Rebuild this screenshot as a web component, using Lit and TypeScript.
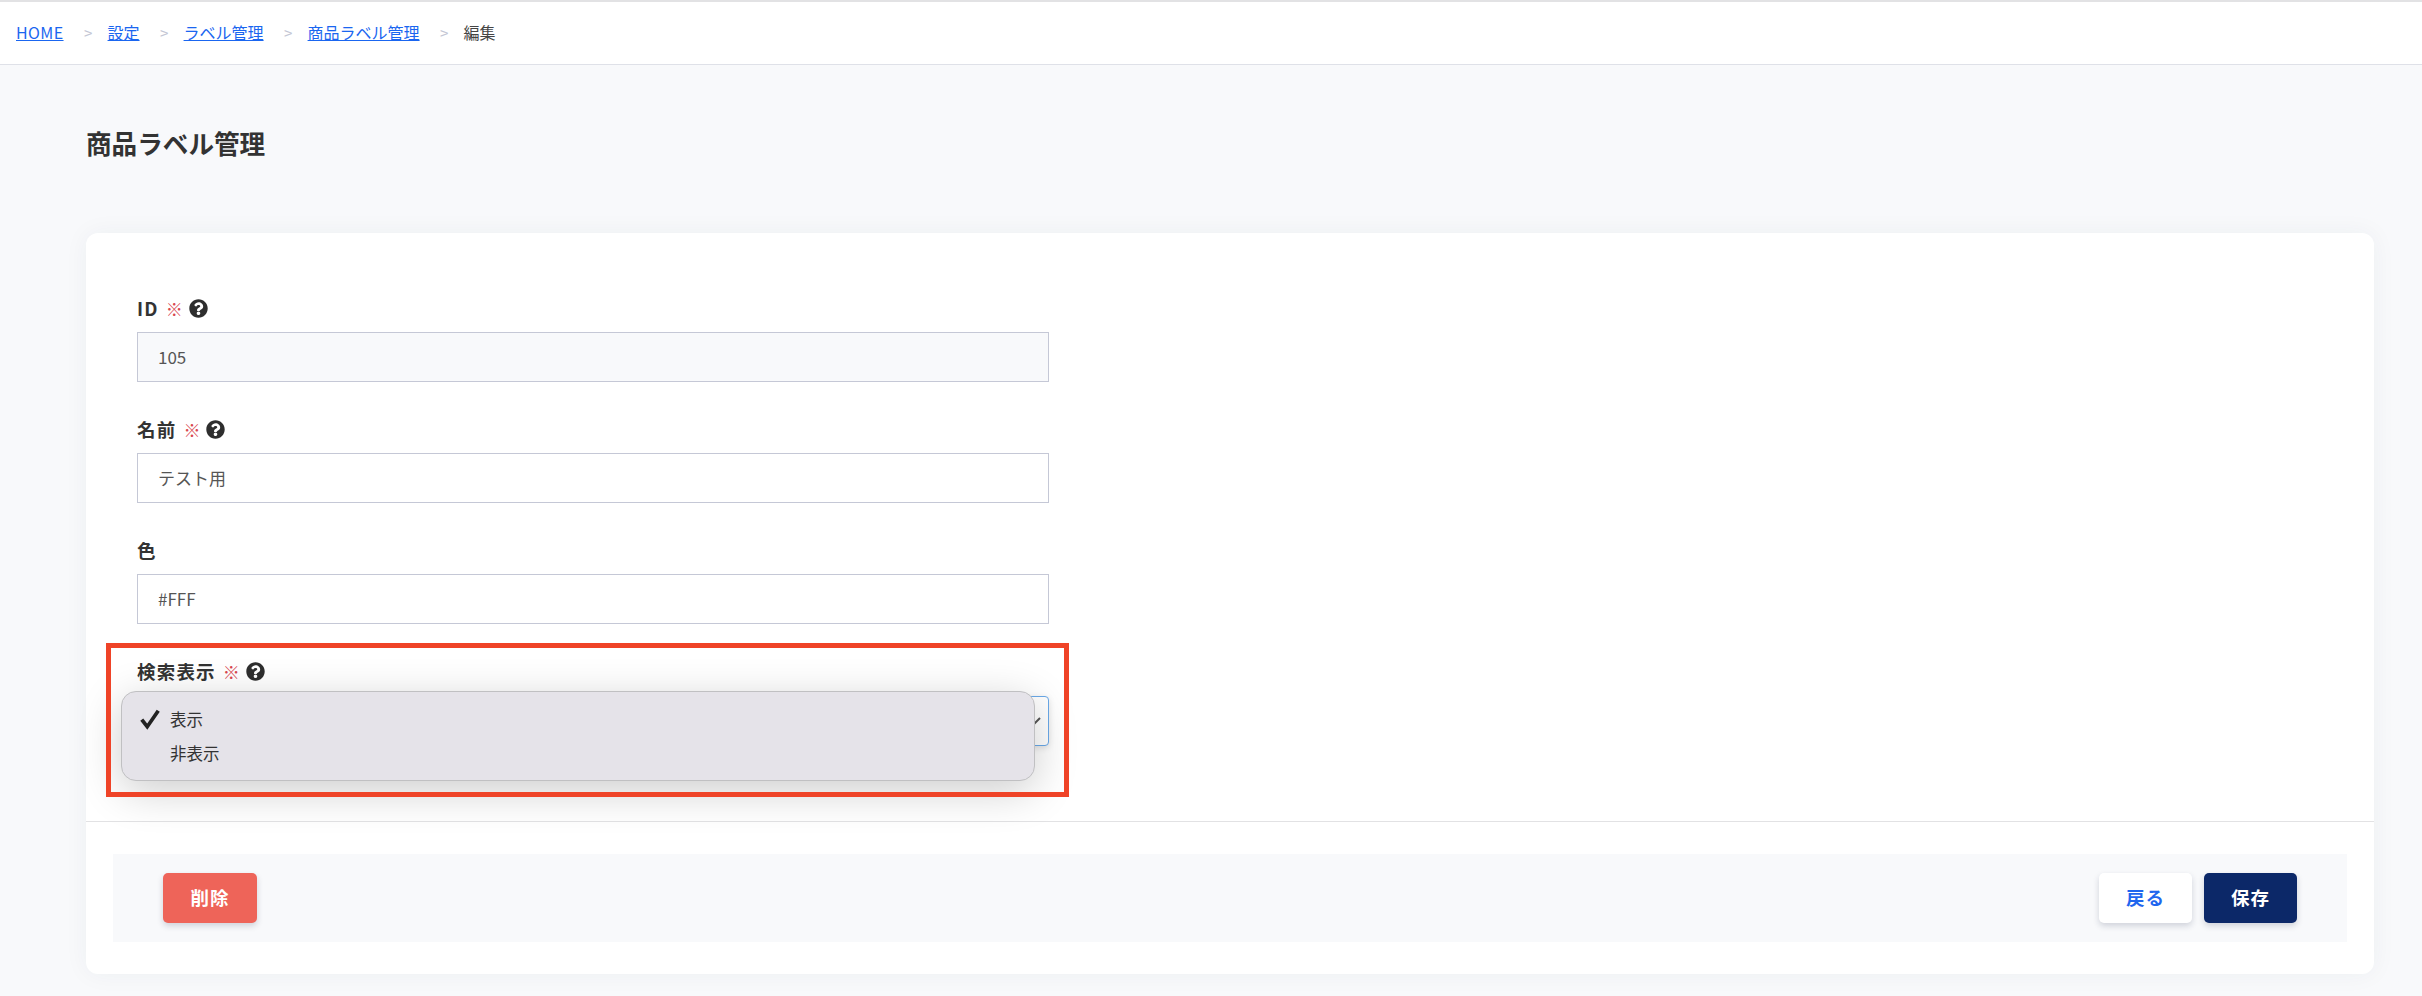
import { LitElement, html, css } from 'lit';
import { customElement } from 'lit/decorators.js';

const helpIcon = html`<svg class="help" viewBox="0 0 512 512" fill="currentColor"><path d="M504 256c0 136.997-111.043 248-248 248S8 392.997 8 256C8 119.083 119.043 8 256 8s248 111.083 248 248zM262.655 90c-54.497 0-89.255 23.87-116.549 66.493-3.536 5.522-2.35 12.797 2.87 16.754l34.722 26.328c5.363 4.067 13.01 3.12 17.212-2.141 17.868-22.37 30.133-35.34 57.344-35.34 20.445 0 45.731 13.157 45.731 32.983 0 14.988-12.372 22.683-32.558 34.02C247.922 243.255 216 263.95 216 306.2V312c0 6.627 5.373 12 12 12h56c6.627 0 12-5.373 12-12v-1.92c0-29.27 85.62-30.52 85.62-109.72C381.62 140.69 319.6 90 262.655 90zM256 338c-26.467 0-48 21.533-48 48 0 26.467 21.533 48 48 48s48-21.533 48-48c0-26.467-21.533-48-48-48z"/></svg>`;

@customElement('app-root')
export class AppRoot extends LitElement {
  static styles = css`
    :host {
      display: block;
      min-height: 996px;
      background: #f8f9fb;
      font-family: "Noto Sans CJK JP", "Noto Sans", sans-serif;
      color: #333;
      overflow: hidden;
    }
    .crumbs {
      display: flex;
      align-items: center;
      height: 60px;
      padding: 0 0 2px 16px;
      background: #fff;
      border-top: 2px solid #e2e2e4;
      border-bottom: 1px solid #dfe1e8;
      font-size: 16px;
    }
    .crumbs a {
      color: #1a66f0;
      text-decoration: underline;
    }
    .crumbs .home {
      letter-spacing: 0.4px;
    }
    .crumbs .sep {
      width: 44px;
      padding-left: 5px;
      box-sizing: border-box;
      text-align: center;
      color: #c3c6d4;
      font-size: 15px;
    }
    .crumbs .current {
      color: #444;
    }
    h1 {
      margin: 0;
      height: 168px;
      padding: 60px 0 0 86px;
      box-sizing: border-box;
      font-size: 25.6px;
      line-height: 36px;
      font-weight: 700;
      color: #333;
    }
    .card {
      position: relative;
      margin: 0 48px 0 86px;
      background: #fff;
      border-radius: 12px;
      box-shadow: 0 0 24px rgba(40, 50, 80, 0.05);
      height: 741px;
      box-sizing: border-box;
      padding-top: 62px;
    }
    .fields {
      display: flex;
      flex-direction: column;
      gap: 35px;
      padding: 0 51px;
      width: 912px;
      height: 526px;
    }
    .field {
      display: flex;
      flex-direction: column;
      gap: 11px;
    }
    .field + .field {
      margin-top: -1px;
    }
    .label {
      display: flex;
      align-items: center;
      height: 26px;
      font-size: 18.5px;
      font-weight: 700;
      letter-spacing: 1.2px;
      color: #333;
    }
    .req {
      margin-left: 7px;
      font-size: 17px;
      font-weight: 400;
      letter-spacing: 0;
      color: #d9474f;
    }
    .help {
      width: 19px;
      height: 19px;
      margin-left: 6px;
      color: #2e2e2e;
    }
    .input {
      display: flex;
      align-items: center;
      height: 50px;
      padding: 0 20px 2px;
      box-sizing: border-box;
      background: #fff;
      border: 1px solid #c5c8d6;
      font-size: 17px;
      color: #555;
    }
    .input.readonly {
      background: #f8f9fb;
    }
    .input.select {
      position: relative;
      margin-top: 1px;
      justify-content: flex-end;
      padding: 0 6px;
      border-color: #6aa9e9;
      border-radius: 4px;
      box-shadow: 0 2px 6px rgba(0, 0, 0, 0.12);
    }
    .chev {
      width: 14px;
      height: 10px;
    }
    .menu {
      position: absolute;
      left: 35px;
      top: 458px;
      width: 914px;
      height: 90px;
      box-sizing: border-box;
      padding: 10px 0 0 48px;
      background: #e5e3e9;
      border: 1px solid #c0c0c2;
      border-radius: 15px;
      box-shadow: 0 10px 44px rgba(0, 0, 0, 0.2);
      font-size: 16.5px;
      color: #333;
    }
    .menu div {
      position: relative;
      height: 34px;
      line-height: 34px;
    }
    .check {
      position: absolute;
      left: -31px;
      top: 6px;
      width: 22px;
      height: 22px;
    }
    .highlight {
      position: absolute;
      left: 20px;
      top: 410px;
      width: 963px;
      height: 154px;
      box-sizing: border-box;
      border: 5px solid #ef4327;
      pointer-events: none;
    }
    .divider {
      height: 1px;
      background: #e2e2e4;
    }
    .actions {
      display: flex;
      align-items: center;
      justify-content: space-between;
      height: 88px;
      margin: 32px 27px 0;
      padding: 0 50px;
      background: #f8f9fb;
    }
    .right {
      display: flex;
      gap: 12px;
    }
    button {
      width: 93px;
      height: 50px;
      padding: 0 0 2px;
      border: 0;
      border-radius: 5px;
      font-family: inherit;
      font-size: 18.5px;
      font-weight: 700;
      letter-spacing: 1px;
      box-shadow: 0 3px 6px rgba(30, 40, 70, 0.18);
    }
    .danger {
      width: 94px;
      background: #ee6459;
      color: #fff;
    }
    .back {
      background: #fff;
      color: #1f66ee;
    }
    .save {
      background: #0c2868;
      color: #fff;
    }
  `;

  render() {
    return html`
      <nav class="crumbs">
        <a class="home">HOME</a><span class="sep">&gt;</span>
        <a>設定</a><span class="sep">&gt;</span>
        <a>ラベル管理</a><span class="sep">&gt;</span>
        <a>商品ラベル管理</a><span class="sep">&gt;</span>
        <span class="current">編集</span>
      </nav>
      <h1>商品ラベル管理</h1>
      <section class="card">
        <div class="fields">
          <div class="field">
            <div class="label">ID<span class="req">※</span>${helpIcon}</div>
            <div class="input readonly">105</div>
          </div>
          <div class="field">
            <div class="label">名前<span class="req">※</span>${helpIcon}</div>
            <div class="input">テスト用</div>
          </div>
          <div class="field">
            <div class="label">色</div>
            <div class="input">#FFF</div>
          </div>
          <div class="field">
            <div class="label">検索表示<span class="req">※</span>${helpIcon}</div>
            <div class="input select">
              <svg class="chev" viewBox="0 0 14 10" fill="none" stroke="#555" stroke-width="2"><path d="M6 8l6-6"/></svg>
            </div>
          </div>
        </div>
        <div class="divider"></div>
        <div class="actions">
          <button class="danger">削除</button>
          <div class="right">
            <button class="back">戻る</button>
            <button class="save">保存</button>
          </div>
        </div>
        <div class="menu">
          <div>
            <svg class="check" viewBox="0 0 20 20" fill="none" stroke="#222" stroke-width="3.4"><path d="M2.5 10.5l5 6.5L17.5 2.5"/></svg>表示
          </div>
          <div>非表示</div>
        </div>
        <div class="highlight"></div>
      </section>
    `;
  }
}
